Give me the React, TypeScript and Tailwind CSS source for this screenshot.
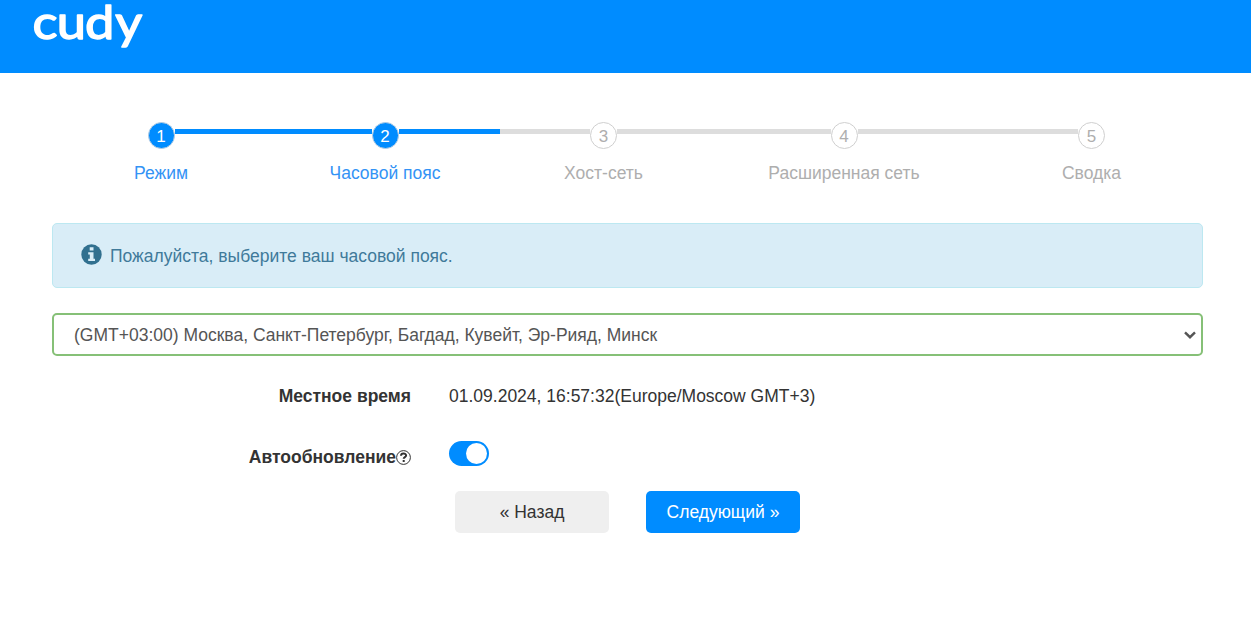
import React, { useState } from "react";

interface StepProps {
  index: number;
  label: string;
  width: string;
  active?: boolean;
  first?: boolean;
  last?: boolean;
}

const steps: StepProps[] = [
  { index: 1, label: "Режим", width: "w-[218px]", active: true, first: true },
  { index: 2, label: "Часовой пояс", width: "w-[230px]", active: true },
  { index: 3, label: "Хост-сеть", width: "w-[207px]" },
  { index: 4, label: "Расширенная сеть", width: "w-[274px]" },
  { index: 5, label: "Сводка", width: "w-[221px]", last: true },
];

function Logo() {
  return (
    <svg width="124" height="56" className="block overflow-visible" aria-label="cudy">
      <text
        x="2.1 23.5 48.2 74.8"
        y="38.8"
        transform="scale(1.14 1)"
        fill="#fff"
        stroke="#fff"
        strokeWidth="1.4"
        strokeLinejoin="round"
        className="font-['Lato',sans-serif] text-[46px]"
      >
        cudy
      </text>
    </svg>
  );
}

function Step({ index, label, width, active, first, last }: StepProps) {
  const line = active ? "bg-[#008cff]" : "bg-[#dddddd]";

  return (
    <li className={`${width} flex flex-col items-center ${active ? "text-[#3393f5]" : "text-[#aeaeae]"}`}>
      <div className="flex h-[27px] w-full items-center">
        <span className={`mb-[8px] h-[5px] flex-1 ${first ? "" : line}`} />
        <span
          className={`flex size-[27px] items-center justify-center rounded-full border pt-px text-[17px] leading-none ${
            active ? "border-[#b5cde3] bg-[#008cff] text-white" : "border-[#cfcfcf] bg-white"
          }`}
        >
          {index}
        </span>
        <span className={`mb-[8px] h-[5px] flex-1 ${last ? "" : line}`} />
      </div>
      <span className="mt-3 leading-[25px]">{label}</span>
    </li>
  );
}

export default function App() {
  const [autoUpdate, setAutoUpdate] = useState(true);

  return (
    <div className="min-h-screen bg-white font-['Liberation_Sans',Arial,sans-serif] text-[17.5px] leading-[25px] text-[#333333]">
      <header className="h-[73px] bg-[#008cff] pl-[30px]">
        <Logo />
      </header>

      <main className="ml-[52px] w-[1150.5px] pt-[49px]">
        <ul className="flex">
          {steps.map((step) => (
            <Step key={step.index} {...step} />
          ))}
        </ul>

        <div className="mt-[37px] flex h-[65px] items-center rounded-[5px] border border-[#bce8f1] bg-[#d9edf7] pl-7 text-[#3f7a9a]">
          <svg width="21" height="21" viewBox="0 0 21 21" className="mr-2 mb-[3px]">
            <circle cx="10.5" cy="10.5" r="10.2" fill="#31708f" />
            <path d="M8.7 3.2h3.8v3.3H8.7zM7.2 8.2h5.3v6.6h1.5v2.2H7.2v-2.2h1.6v-4.4H7.2z" fill="#d9edf7" />
          </svg>
          <span className="pt-px">Пожалуйста, выберите ваш часовой пояс.</span>
        </div>

        <button
          type="button"
          className="mt-[25px] flex h-[43px] w-full items-center justify-between rounded-[5px] border-2 border-[#86c077] bg-white pr-[5px] pl-5 text-[#555555]"
        >
          <span className="pt-px">(GMT+03:00) Москва, Санкт-Петербург, Багдад, Кувейт, Эр-Рияд, Минск</span>
          <svg width="12" height="8" viewBox="0 0 12 8" fill="none" stroke="#555" strokeWidth="2.4">
            <path d="M1 1.3 6 6.2 11 1.3" />
          </svg>
        </button>

        <div className="mt-[28px] flex">
          <span className="w-[359px] text-right font-bold">Местное время</span>
          <span className="ml-[38px]">01.09.2024, 16:57:32(Europe/Moscow GMT+3)</span>
        </div>

        <div className="mt-[32px] flex">
          <span className="flex w-[359px] items-center justify-end pt-[4px] font-bold">
            Автообновление
            <svg width="15" height="15" viewBox="0 0 15 15" fill="none" stroke="#333" className="mb-px">
              <circle cx="7.5" cy="7.5" r="6.9" strokeWidth="1" />
              <path d="M5 5.8c0-3.2 5.1-3 5.1-.3 0 1.8-2.4 1.6-2.4 3.3M7.7 9.9v2" strokeWidth="2" />
            </svg>
          </span>
          <button
            type="button"
            role="switch"
            aria-checked={autoUpdate}
            onClick={() => setAutoUpdate(!autoUpdate)}
            className={`ml-[38px] flex h-[25px] w-10 items-center rounded-full px-[2px] ${
              autoUpdate ? "justify-end bg-[#008cff]" : "bg-[#dddddd]"
            }`}
          >
            <span className="size-[21px] rounded-full bg-white" />
          </button>
        </div>

        <div className="mt-[20.5px] ml-[403px] flex gap-[37px]">
          <button type="button" className="h-[42.5px] w-[154px] rounded-[5px] bg-[#efefef] pt-[2px]">
            « Назад
          </button>
          <button type="button" className="h-[42.5px] w-[154px] rounded-[5px] bg-[#008cff] pt-[2px] text-white">
            Следующий »
          </button>
        </div>
      </main>
    </div>
  );
}
